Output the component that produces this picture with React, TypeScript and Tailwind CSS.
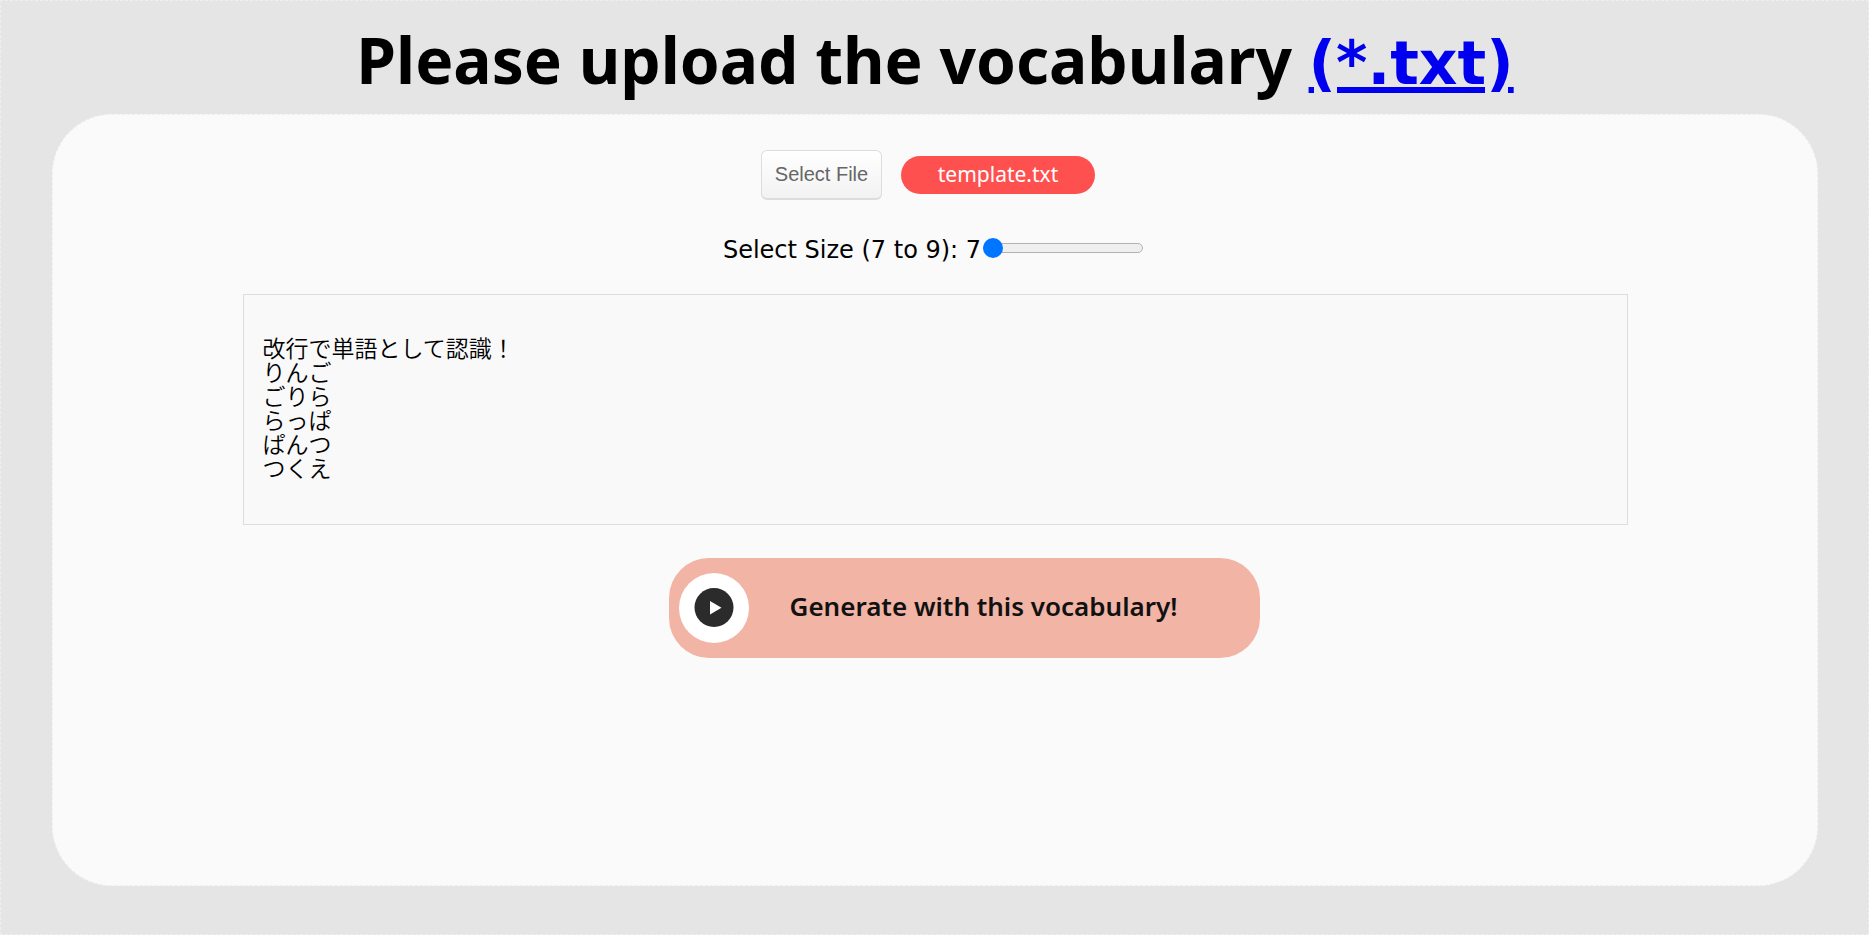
import { useState } from "react";

export default function App() {
  const [size, setSize] = useState(7);
  return (
    <div className="flex min-h-screen flex-col border border-dashed border-[#efefef] bg-[#e5e5e5] pr-[50px] pb-12 pl-[51px] font-['Noto_Sans','Noto_Sans_CJK_JP',sans-serif] text-black">
      <h1 className="pt-[15px] pb-[10px] text-center text-[64px] leading-[88px] font-bold">
        Please upload the vocabulary{" "}
        <a
          href="#template"
          className="font-['DejaVu_Sans',sans-serif] text-[60px] leading-none text-[#0000ee] underline decoration-[6px] underline-offset-[3px]"
        >
          (*.txt)
        </a>
      </h1>
      <main className="flex grow flex-col items-center rounded-[60px] border border-dashed border-[#efefef] bg-[#fafafa] pt-[35px]">
        <div className="flex items-center gap-[19px] pr-[14px]">
          <button
            type="button"
            className="h-[50px] w-[121px] rounded-md border border-b-2 border-[#ddd] bg-linear-to-b from-white to-[#f2f2f2] pb-px font-['Liberation_Sans',sans-serif] text-[20px] text-[#666]"
          >
            Select File
          </button>
          <span className="flex h-[38px] w-[194px] items-center justify-center rounded-full bg-[#ff5050] pb-[2px] text-[21px] leading-6 text-white">
            template.txt
          </span>
        </div>
        <div className="mt-[30px] flex h-9 items-center gap-[2px] pr-1">
          <label htmlFor="size" className="pt-[3px] font-['DejaVu_Sans',sans-serif] text-[24px] leading-9">
            Select Size (7 to 9): {size}
          </label>
          <input
            id="size"
            type="range"
            min={7}
            max={9}
            value={size}
            onChange={(e) => setSize(Number(e.target.value))}
            className="h-[10px] w-40 appearance-none rounded-full border border-[#b2b2b2] bg-[#efefef] [&::-webkit-slider-thumb]:-ml-px [&::-webkit-slider-thumb]:size-5 [&::-webkit-slider-thumb]:appearance-none [&::-webkit-slider-thumb]:rounded-full [&::-webkit-slider-thumb]:bg-[#0075ff]"
          />
        </div>
        <pre className="mt-7 w-[1385px] max-w-full border border-[#ddd] bg-[#f9f9f9] px-[19px] pt-10 pb-[45px] font-['Noto_Sans_CJK_JP',sans-serif] text-[23px] leading-6 font-[350]">
          {"改行で単語として認識！\nりんご\nごりら\nらっぱ\nぱんつ\nつくえ"}
        </pre>
        <button
          type="button"
          className="mt-[33px] ml-[58px] flex h-[100px] w-[591px] items-center rounded-[40px] bg-[#f1b4a5] pl-[10px] text-[#111]"
        >
          <span className="flex size-[70px] items-center justify-center rounded-full bg-white">
            <svg viewBox="0 0 40 40" className="size-10" aria-hidden="true">
              <circle cx="20" cy="19.5" r="19.5" fill="#2b2b2b" />
              <path d="M16 13v13.500l11.500-6.750z" fill="#fff" />
            </svg>
          </span>
          <span className="ml-[41px] pb-1 text-[26px] leading-9 font-semibold">Generate with this vocabulary!</span>
        </button>
      </main>
    </div>
  );
}
